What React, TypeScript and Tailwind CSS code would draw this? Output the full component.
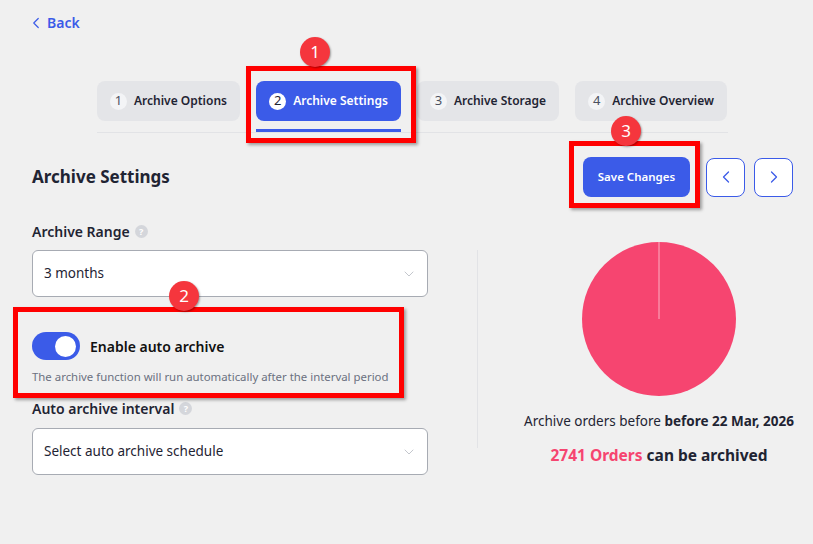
import { ChevronDown, ChevronLeft, ChevronRight } from "lucide-react";

const steps = [
  { n: 1, label: "Archive Options", w: "w-[143px]" },
  { n: 2, label: "Archive Settings", w: "w-[145px]" },
  { n: 3, label: "Archive Storage", w: "w-[142px]" },
  { n: 4, label: "Archive Overview", w: "w-[152px]" },
];

const HelpDot = () => (
  <span className="ml-[5px] inline-flex h-[13px] w-[13px] items-center justify-center rounded-full bg-[#d4d6db] text-[9px] font-bold leading-none text-white">
    ?
  </span>
);

const Marker = ({ n }: { n: number }) => (
  <span className="flex h-[30px] w-[30px] items-center justify-center rounded-full bg-[#f5363d] text-[17px] text-white shadow-[1px_1px_2px_rgba(0,0,0,0.35)]">
    {n}
  </span>
);

const SelectBox = ({ text }: { text: string }) => (
  <div className="flex h-[47px] w-[396px] items-center justify-between rounded-md border border-[#a7abb3] bg-white pl-[11px] pr-[10px] text-[13.5px] text-[#1f2433]">
    <span>{text}</span>
    <ChevronDown className="h-4 w-4 text-[#c4c7cd]" strokeWidth={1.5} />
  </div>
);

const App = () => {
  return (
    <div
      className="relative h-[544px] w-[813px] overflow-hidden bg-[#f0f0f0] text-[#1f2433]"
      style={{ fontFamily: '"Segoe UI", "Noto Sans", sans-serif' }}
    >
      <div className="px-[32px] pt-[12px]">
        <div className="-ml-[5px] flex items-center gap-[2px] text-[14px] font-semibold text-[#3b5be8]">
          <ChevronLeft className="h-[18px] w-[18px]" strokeWidth={1.6} />
          Back
        </div>

        {/* steps */}
        <div className="ml-[65px] mt-[48px] w-[631px] border-b border-[#e2e3e6]">
          <div className="flex gap-4">
            {steps.map((s) => {
              const active = s.n === 2;
              return (
                <div key={s.n} className={"flex flex-col " + s.w}>
                  <div
                    className={
                      active
                        ? "flex h-[40px] items-center justify-center gap-[7px] whitespace-nowrap rounded-lg bg-[#3b5be8] text-[12px] font-semibold text-white"
                        : "flex h-[40px] items-center justify-center gap-[7px] whitespace-nowrap rounded-lg bg-[#e4e5e8] text-[12px] font-semibold text-[#1f2433]"
                    }
                  >
                    <span
                      className={
                        active
                          ? "flex h-[17px] w-[17px] items-center justify-center rounded-full bg-white text-[13px] font-normal text-[#1f2433]"
                          : "flex h-[17px] w-[17px] items-center justify-center rounded-full bg-[#f3f4f6] text-[13px] font-normal text-[#4b5160]"
                      }
                    >
                      {s.n}
                    </span>
                    {s.label}
                  </div>
                  <div
                    className={
                      active
                        ? "mt-[8px] h-[3px] bg-[#3b5be8]"
                        : "mt-[8px] h-[3px]"
                    }
                  />
                </div>
              );
            })}
          </div>
        </div>

        {/* header row */}
        <div className="mr-[-12px] mt-[24px] flex items-center justify-between">
          <h2 className="text-[17px] font-bold text-[#1f2433]">Archive Settings</h2>
          <div className="flex items-center gap-[9px]">
            <button className="mr-[7px] h-[40px] w-[107px] rounded-lg bg-[#3b5be8] text-[11.5px] font-semibold text-white">
              Save Changes
            </button>
            <button className="flex h-[39px] w-[39px] items-center justify-center rounded-lg border border-[#3b5be8] bg-white text-[#3b5be8]">
              <ChevronLeft className="h-5 w-5" strokeWidth={1.5} />
            </button>
            <button className="flex h-[39px] w-[39px] items-center justify-center rounded-lg border border-[#3b5be8] bg-white text-[#3b5be8]">
              <ChevronRight className="h-5 w-5" strokeWidth={1.5} />
            </button>
          </div>
        </div>

        {/* body */}
        <div className="mt-[24px] flex">
          <div className="w-[396px]">
            <div className="flex items-center text-[14px] font-semibold">
              Archive Range
              <HelpDot />
            </div>
            <div className="mt-[8px]">
              <SelectBox text="3 months" />
            </div>

            <div className="mt-[35px] flex items-center gap-[10px]">
              <div className="flex h-[28px] w-[48px] items-center justify-end rounded-full bg-[#3b5be8] pr-[4px]">
                <div className="h-[21px] w-[21px] rounded-full bg-white" />
              </div>
              <span className="text-[14px] font-semibold text-[#111]">Enable auto archive</span>
            </div>
            <p className="mt-[8px] whitespace-nowrap text-[11.4px] text-[#6b7180]">
              The archive function will run automatically after the interval period
            </p>

            <div className="mt-[13px] flex items-center text-[14px] font-semibold">
              Auto archive interval
              <HelpDot />
            </div>
            <div className="mt-[9px]">
              <SelectBox text="Select auto archive schedule" />
            </div>
          </div>

          <div className="ml-[49px] mt-[29px] h-[198px] w-px bg-[#e2e3e6]" />

          <div className="mr-[-32px] flex flex-1 flex-col items-center pl-[27px]">
            <svg width="154" height="154" viewBox="0 0 154 154" className="mt-[21px]">
              <circle cx="77" cy="77" r="77" fill="#f64570" />
              <line x1="77" y1="0" x2="77" y2="77" stroke="#fbb1c2" strokeWidth="1" />
            </svg>
            <p className="mt-[15px] whitespace-nowrap text-[13.5px] text-[#1f2433]">
              Archive orders before <span className="font-bold">before 22 Mar, 2026</span>
            </p>
            <p className="mt-[13px] text-[15.5px] font-bold text-[#1f2433]">
              <span className="text-[#f64570]">2741 Orders</span> can be archived
            </p>
          </div>
        </div>
      </div>

      {/* annotations */}
      <div className="absolute left-[246px] top-[66px] h-[77px] w-[170px] border-[5px] border-[#ff0000] shadow-[2px_2px_3px_rgba(0,0,0,0.35)]" />
      <div className="absolute left-[300px] top-[37px]">
        <Marker n={1} />
      </div>
      <div className="absolute left-[569px] top-[141px] h-[67px] w-[131px] border-[5px] border-[#ff0000] shadow-[2px_2px_3px_rgba(0,0,0,0.35)]" />
      <div className="absolute left-[611px] top-[116px]">
        <Marker n={3} />
      </div>
      <div className="absolute left-[13px] top-[307px] h-[91px] w-[391px] border-[5px] border-[#ff0000] shadow-[2px_2px_3px_rgba(0,0,0,0.35)]" />
      <div className="absolute left-[169px] top-[281px]">
        <Marker n={2} />
      </div>
    </div>
  );
};

export default App;
